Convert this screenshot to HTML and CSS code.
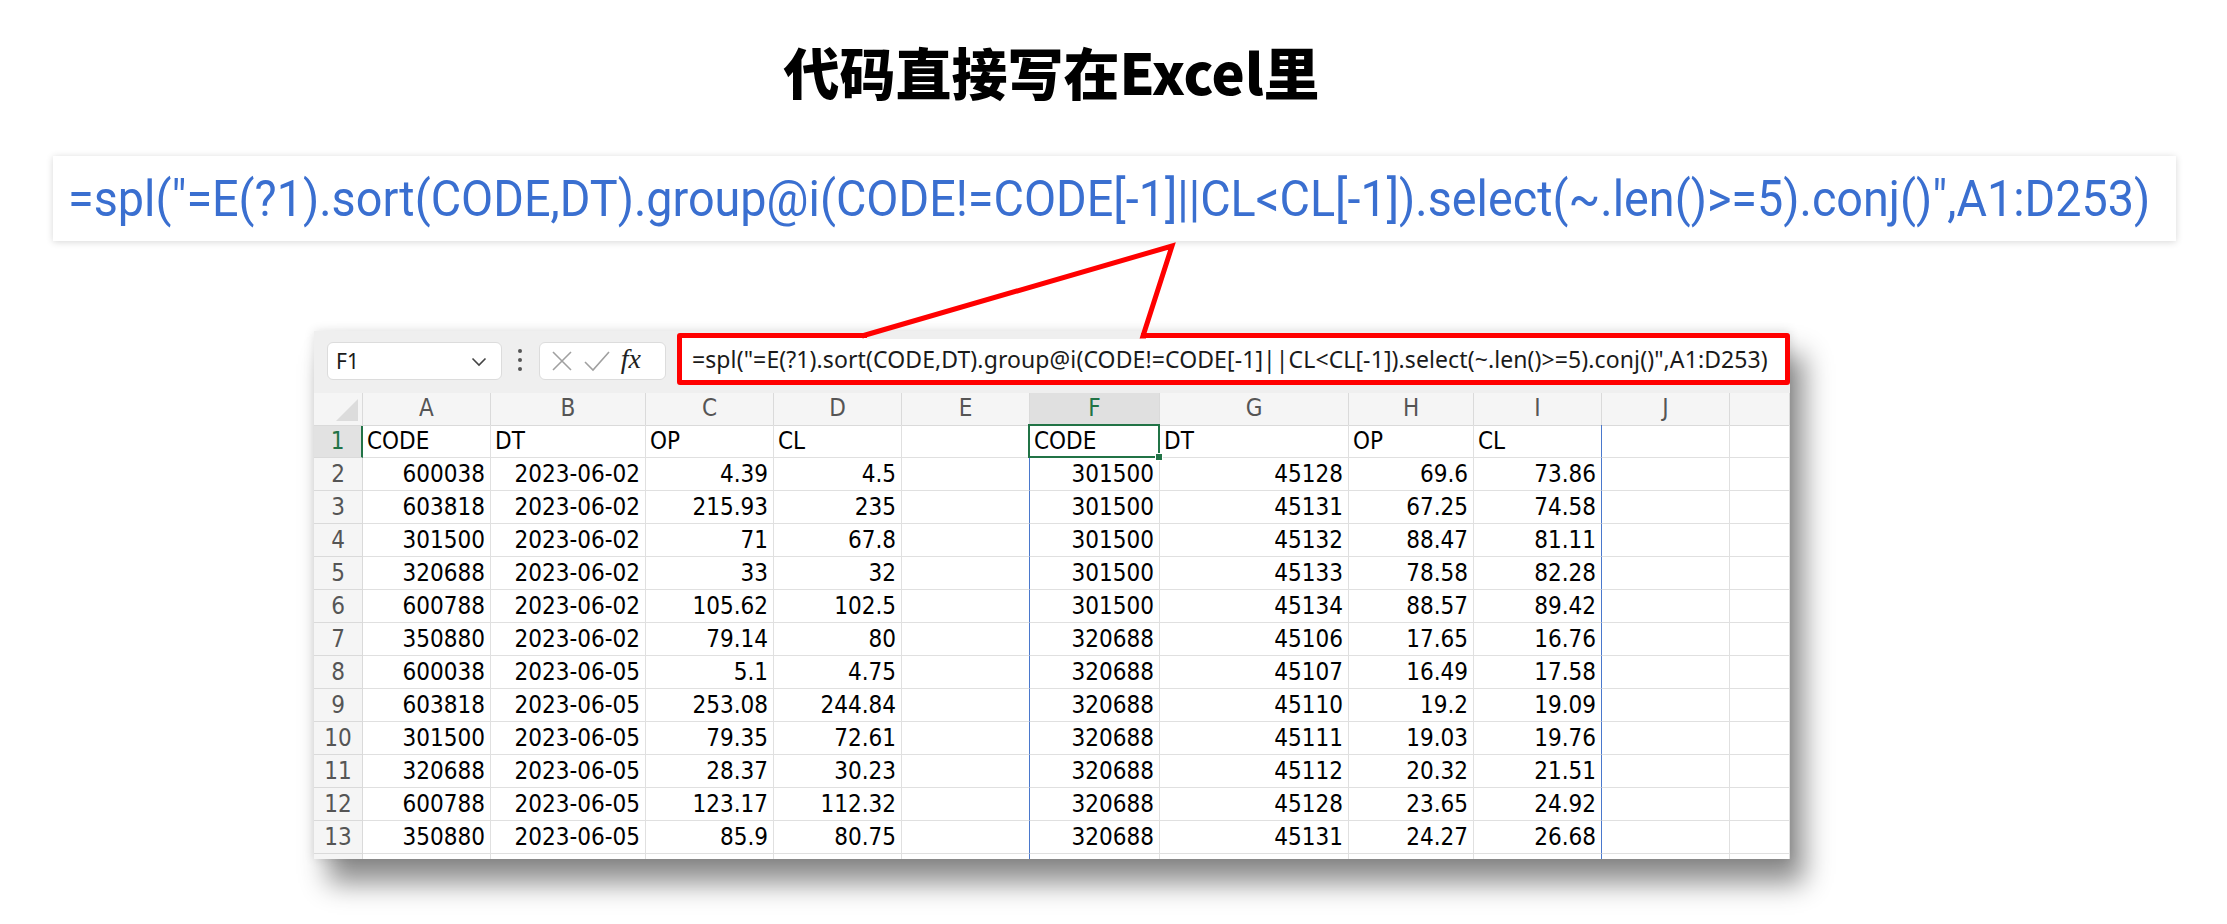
FILE: index.html
```html
<!DOCTYPE html>
<html lang="zh">
<head>
<meta charset="utf-8">
<title>代码直接写在Excel里</title>
<link rel="stylesheet" href="styles.css">
</head>
<body>
<div class="page">
  <h1 class="title">代码直接写在Excel里</h1>

  <div class="formula-card">
    <span class="formula-text">=spl("=E(?1).sort(CODE,DT).group@i(CODE!=CODE[-1]||CL&lt;CL[-1]).select(~.len()&gt;=5).conj()",A1:D253)</span>
  </div>

  <div class="excel">
    <div class="toolbar">
      <div class="namebox">
        <span class="namebox-text">F1</span>
        <svg class="chev" width="16" height="10" viewBox="0 0 16 10"><polyline points="1.5,1.5 8,8 14.5,1.5" fill="none" stroke="#444" stroke-width="1.6"/></svg>
      </div>
      <div class="dots"><span></span><span></span><span></span></div>
      <div class="fxbox">
        <svg class="ico" width="24" height="24" viewBox="0 0 24 24"><path d="M3 3 L21 21 M21 3 L3 21" stroke="#a0a0a0" stroke-width="1.6" fill="none"/></svg>
        <svg class="ico" width="28" height="24" viewBox="0 0 28 24"><polyline points="2,13 10,21 26,3" stroke="#a0a0a0" stroke-width="1.6" fill="none"/></svg>
        <span class="fx">fx</span>
      </div>
      <div class="fbar">=spl("=E(?1).sort(CODE,DT).group@i(CODE!=CODE[-1]||CL&lt;CL[-1]).select(~.len()&gt;=5).conj()",A1:D253)</div>
    </div>

    <div class="sheet">
      <div class="row head">
        <div class="corner"><span class="tri"></span></div>
        <div class="ch">A</div><div class="ch">B</div><div class="ch">C</div><div class="ch">D</div><div class="ch">E</div>
        <div class="ch csel">F</div><div class="ch">G</div><div class="ch">H</div><div class="ch">I</div><div class="ch">J</div><div class="ch"></div>
      </div>
      <div class="row data">
        <div class="rh rsel">1</div>
        <div class="c t">CODE</div><div class="c t">DT</div><div class="c t">OP</div><div class="c t">CL</div><div class="c"></div>
        <div class="c t sel">CODE</div><div class="c t">DT</div><div class="c t">OP</div><div class="c t">CL</div><div class="c"></div><div class="c"></div>
      </div>
      <div class="row data">
        <div class="rh">2</div>
        <div class="c">600038</div><div class="c">2023-06-02</div><div class="c">4.39</div><div class="c">4.5</div><div class="c"></div>
        <div class="c">301500</div><div class="c">45128</div><div class="c">69.6</div><div class="c">73.86</div><div class="c"></div><div class="c"></div>
      </div>
      <div class="row data">
        <div class="rh">3</div>
        <div class="c">603818</div><div class="c">2023-06-02</div><div class="c">215.93</div><div class="c">235</div><div class="c"></div>
        <div class="c">301500</div><div class="c">45131</div><div class="c">67.25</div><div class="c">74.58</div><div class="c"></div><div class="c"></div>
      </div>
      <div class="row data">
        <div class="rh">4</div>
        <div class="c">301500</div><div class="c">2023-06-02</div><div class="c">71</div><div class="c">67.8</div><div class="c"></div>
        <div class="c">301500</div><div class="c">45132</div><div class="c">88.47</div><div class="c">81.11</div><div class="c"></div><div class="c"></div>
      </div>
      <div class="row data">
        <div class="rh">5</div>
        <div class="c">320688</div><div class="c">2023-06-02</div><div class="c">33</div><div class="c">32</div><div class="c"></div>
        <div class="c">301500</div><div class="c">45133</div><div class="c">78.58</div><div class="c">82.28</div><div class="c"></div><div class="c"></div>
      </div>
      <div class="row data">
        <div class="rh">6</div>
        <div class="c">600788</div><div class="c">2023-06-02</div><div class="c">105.62</div><div class="c">102.5</div><div class="c"></div>
        <div class="c">301500</div><div class="c">45134</div><div class="c">88.57</div><div class="c">89.42</div><div class="c"></div><div class="c"></div>
      </div>
      <div class="row data">
        <div class="rh">7</div>
        <div class="c">350880</div><div class="c">2023-06-02</div><div class="c">79.14</div><div class="c">80</div><div class="c"></div>
        <div class="c">320688</div><div class="c">45106</div><div class="c">17.65</div><div class="c">16.76</div><div class="c"></div><div class="c"></div>
      </div>
      <div class="row data">
        <div class="rh">8</div>
        <div class="c">600038</div><div class="c">2023-06-05</div><div class="c">5.1</div><div class="c">4.75</div><div class="c"></div>
        <div class="c">320688</div><div class="c">45107</div><div class="c">16.49</div><div class="c">17.58</div><div class="c"></div><div class="c"></div>
      </div>
      <div class="row data">
        <div class="rh">9</div>
        <div class="c">603818</div><div class="c">2023-06-05</div><div class="c">253.08</div><div class="c">244.84</div><div class="c"></div>
        <div class="c">320688</div><div class="c">45110</div><div class="c">19.2</div><div class="c">19.09</div><div class="c"></div><div class="c"></div>
      </div>
      <div class="row data">
        <div class="rh">10</div>
        <div class="c">301500</div><div class="c">2023-06-05</div><div class="c">79.35</div><div class="c">72.61</div><div class="c"></div>
        <div class="c">320688</div><div class="c">45111</div><div class="c">19.03</div><div class="c">19.76</div><div class="c"></div><div class="c"></div>
      </div>
      <div class="row data">
        <div class="rh">11</div>
        <div class="c">320688</div><div class="c">2023-06-05</div><div class="c">28.37</div><div class="c">30.23</div><div class="c"></div>
        <div class="c">320688</div><div class="c">45112</div><div class="c">20.32</div><div class="c">21.51</div><div class="c"></div><div class="c"></div>
      </div>
      <div class="row data">
        <div class="rh">12</div>
        <div class="c">600788</div><div class="c">2023-06-05</div><div class="c">123.17</div><div class="c">112.32</div><div class="c"></div>
        <div class="c">320688</div><div class="c">45128</div><div class="c">23.65</div><div class="c">24.92</div><div class="c"></div><div class="c"></div>
      </div>
      <div class="row data">
        <div class="rh">13</div>
        <div class="c">350880</div><div class="c">2023-06-05</div><div class="c">85.9</div><div class="c">80.75</div><div class="c"></div>
        <div class="c">320688</div><div class="c">45131</div><div class="c">24.27</div><div class="c">26.68</div><div class="c"></div><div class="c"></div>
      </div>
      <div class="row data">
        <div class="rh"></div>
        <div class="c"></div><div class="c"></div><div class="c"></div><div class="c"></div><div class="c"></div>
        <div class="c"></div><div class="c"></div><div class="c"></div><div class="c"></div><div class="c"></div><div class="c"></div>
      </div>
    </div>
  </div>

  <svg class="callout" width="2227" height="924" viewBox="0 0 2227 924">
    <rect x="867" y="331" width="274" height="8" fill="#efefef"/>
    <polyline points="862,336 1172,246 1143,336 1146,336" fill="none" stroke="#ff0000" stroke-width="5" stroke-linejoin="miter"/>
  </svg>
</div>
</body>
</html>
```

FILE: styles.css
```css
html, body {
  margin: 0;
  padding: 0;
  background: #ffffff;
}

.page {
  position: relative;
  width: 2227px;
  height: 924px;
  overflow: hidden;
}

.title {
  margin: 0;
  padding-top: 40px;
  padding-right: 124px;
  height: 64px;
  text-align: center;
  font-family: "Noto Sans CJK SC", "Noto Sans", sans-serif;
  font-weight: 900;
  font-size: 56px;
  line-height: 61px;
  color: #000;
}

.formula-card {
  margin-top: 52px;
  margin-left: 53px;
  width: 2123px;
  height: 85px;
  background: #fff;
  box-shadow: 0 1px 7px rgba(0, 0, 0, 0.16);
  display: flex;
  align-items: center;
  padding-left: 15px;
  box-sizing: border-box;
  overflow: hidden;
}

.formula-text {
  display: inline-block;
  flex: none;
  white-space: nowrap;
  font-family: Roboto, "Liberation Sans", sans-serif;
  font-size: 50px;
  color: #3a6fd0;
  transform: scaleX(0.935);
  transform-origin: left center;
}

.excel {
  margin-top: 90px;
  margin-left: 314px;
  width: 1476px;
  height: 528px;
  background: #fff;
  box-shadow: 0 0 10px rgba(0, 0, 0, 0.12), 14px 24px 26px rgba(0, 0, 0, 0.45);
  display: flex;
  flex-direction: column;
}

.toolbar {
  height: 62px;
  flex: none;
  background: #efefef;
  display: flex;
  align-items: flex-start;
}

.namebox {
  margin-top: 11px;
  margin-left: 13px;
  width: 176px;
  height: 38px;
  box-sizing: border-box;
  background: #fff;
  border: 1px solid #dcdcdc;
  border-radius: 6px;
  display: flex;
  align-items: center;
  justify-content: space-between;
  padding: 0 14px 0 8px;
  font-family: "Noto Sans", "Open Sans", sans-serif;
  font-size: 21px;
  color: #1a1a1a;
}

.chev {
  margin-top: 2px;
}

.dots {
  width: 37px;
  height: 62px;
  display: flex;
  flex-direction: column;
  align-items: center;
  justify-content: center;
  gap: 5px;
  margin-top: -2px;
}

.dots span {
  width: 4px;
  height: 4px;
  border-radius: 50%;
  background: #555;
}

.fxbox {
  margin-top: 11px;
  width: 128px;
  height: 38px;
  box-sizing: border-box;
  background: #fff;
  border: 1px solid #dcdcdc;
  border-radius: 6px;
  display: flex;
  align-items: center;
  padding-left: 10px;
  gap: 9px;
}

.fx {
  font-family: "Liberation Serif", "DejaVu Serif", serif;
  font-style: italic;
  font-size: 28px;
  color: #222;
  margin-left: 1px;
  margin-top: -4px;
}

.fbar {
  margin-top: 2px;
  margin-left: 11px;
  width: 1113px;
  height: 52px;
  flex: none;
  box-sizing: border-box;
  border: 5px solid #ff0000;
  border-radius: 3px;
  background: #fff;
  padding-left: 10px;
  display: flex;
  align-items: center;
  white-space: nowrap;
  overflow: hidden;
  font-family: "Noto Sans", "Open Sans", sans-serif;
  font-size: 23px;
  letter-spacing: 0.1px;
  color: #1a1a1a;
}

.sheet {
  flex: 1;
  overflow: hidden;
  font-family: "DejaVu Sans Condensed", "DejaVu Sans", sans-serif;
  font-stretch: condensed;
  font-size: 24px;
}

.row {
  display: grid;
  grid-template-columns: 49px 128px 155px 128px 128px 128px 130px 189px 125px 128px 128px 1fr;
}

.row > div {
  box-sizing: border-box;
  border-right: 1px solid #e0e0e0;
  border-bottom: 1px solid #e0e0e0;
  white-space: nowrap;
  overflow: visible;
}

.head {
  height: 32px;
}

.head > div {
  background: #f5f5f5;
  border-color: #dadada;
  color: #555;
  text-align: center;
  line-height: 31px;
}

.corner {
  position: relative;
}

.tri {
  position: absolute;
  right: 4px;
  bottom: 4px;
  width: 0;
  height: 0;
  border-left: 22px solid transparent;
  border-bottom: 22px solid #dcdcdc;
}

.head .csel {
  background: #e0e0e0;
  color: #217346;
  border-bottom: 2px solid #217346;
}

.data {
  height: 33px;
}

.data > div {
  line-height: 32px;
  color: #000;
  padding: 0 5px;
  text-align: right;
}

.data > .rh {
  background: #f5f5f5;
  border-color: #dadada;
  color: #555;
  text-align: center;
  padding: 0;
}

.data > .rsel {
  background: #e2e2e2;
  color: #217346;
  border-right: 2px solid #217346;
}

.data > .t {
  text-align: left;
  padding-left: 4px;
}

.data > :nth-child(6) {
  border-right-color: #4a78cc;
}

.row > :nth-child(10) {
  border-right-color: #4a78cc;
}

.head > :nth-child(10) {
  border-right-color: #dadada;
}

.data > .sel {
  position: relative;
}

.data > .sel::after {
  content: "";
  position: absolute;
  left: -2px;
  top: -1px;
  right: -1px;
  bottom: -1px;
  border: 2px solid #217346;
}

.data > .sel::before {
  content: "";
  position: absolute;
  right: -4px;
  bottom: -4px;
  width: 6px;
  height: 6px;
  background: #217346;
  border: 1px solid #fff;
  z-index: 2;
}

.callout {
  position: absolute;
  left: 0;
  top: 0;
  pointer-events: none;
}
```
